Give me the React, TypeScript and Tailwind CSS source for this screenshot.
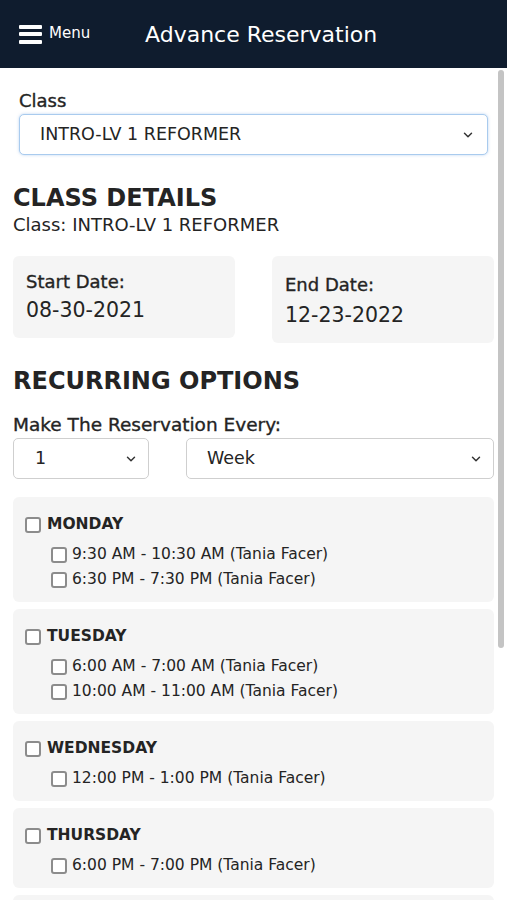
import React from 'react';
import { ChevronDown } from 'lucide-react';

const days = [
  { name: 'MONDAY', slots: ['9:30 AM - 10:30 AM (Tania Facer)', '6:30 PM - 7:30 PM (Tania Facer)'] },
  { name: 'TUESDAY', slots: ['6:00 AM - 7:00 AM (Tania Facer)', '10:00 AM - 11:00 AM (Tania Facer)'] },
  { name: 'WEDNESDAY', slots: ['12:00 PM - 1:00 PM (Tania Facer)'] },
  { name: 'THURSDAY', slots: ['6:00 PM - 7:00 PM (Tania Facer)'] },
];

const Box = () => (
  <span className="inline-block w-[16px] h-[16px] shrink-0 rounded-[3px] border-2 border-[#8c8c8c] bg-white" />
);

const FakeSelect = ({ value, className }: { value: string; className: string }) => (
  <div className={`flex items-center justify-between rounded-[5px] bg-white ${className}`}>
    <span>{value}</span>
    <ChevronDown size={14} strokeWidth={2.5} className="text-[#333]" />
  </div>
);

// medium weight look for DejaVu Book
const medium = '[-webkit-text-stroke:0.35px_currentColor]';

export default function App() {
  return (
    <div className="relative w-[507px] h-[900px] overflow-hidden bg-white text-[#242424] font-['DejaVu_Sans',sans-serif]">
      {/* Header */}
      <header className="h-[68px] bg-[#0f1c2e] flex items-center text-white">
        <div className="flex items-center pl-[19px] w-[145px]">
          <div className="flex flex-col gap-[3.5px]">
            <span className="block w-[23px] h-[4px] rounded-[1px] bg-white" />
            <span className="block w-[23px] h-[4px] rounded-[1px] bg-white" />
            <span className="block w-[23px] h-[4px] rounded-[1px] bg-white" />
          </div>
          <span className="ml-[7px] text-[15px] leading-[20px] mb-[2px]">Menu</span>
        </div>
        <h1 className="text-[22px] leading-[28px] mt-[2px]">Advance Reservation</h1>
      </header>

      <main className="px-[13px]">
        {/* Class select */}
        <div className="px-[6px] pt-[22px]">
          <label className={`block text-[18px] leading-[22px] ${medium}`}>Class</label>
          <FakeSelect
            value="INTRO-LV 1 REFORMER"
            className="mt-[2px] h-[41px] pl-[20px] pr-[12px] text-[17.5px] border border-[#a9cbee] shadow-[0_0_3px_rgba(120,170,230,0.5)]"
          />
        </div>

        <h2 className="mt-[29px] text-[24px] font-bold leading-[28px]">CLASS DETAILS</h2>
        <p className="mt-[2px] text-[18px] leading-[22px]">Class: INTRO-LV 1 REFORMER</p>

        {/* Dates */}
        <div className="mt-[20px] flex gap-[37px] items-start">
          <div className="w-[222px] h-[82px] rounded-[6px] bg-[#f5f5f5] pl-[13px] pt-[15px]">
            <div className={`text-[18px] leading-[22px] ${medium}`}>Start Date:</div>
            <div className="mt-[3px] text-[20.5px] leading-[28px]">08-30-2021</div>
          </div>
          <div className="w-[222px] h-[87px] rounded-[6px] bg-[#f5f5f5] pl-[13px] pt-[18px]">
            <div className={`text-[18px] leading-[22px] ${medium}`}>End Date:</div>
            <div className="mt-[5px] text-[20.5px] leading-[28px]">12-23-2022</div>
          </div>
        </div>

        <h2 className="mt-[23px] text-[24px] font-bold leading-[30px]">RECURRING OPTIONS</h2>
        <div className={`mt-[18px] text-[18.5px] leading-[22px] ${medium}`}>Make The Reservation Every:</div>
        <div className="mt-[2px] flex gap-[37px]">
          <FakeSelect value="1" className="w-[136px] h-[41px] pl-[21px] pr-[10px] text-[17.5px] border border-[#cfcfcf]" />
          <FakeSelect value="Week" className="flex-1 h-[41px] pl-[20px] pr-[10px] text-[17.5px] border border-[#cfcfcf]" />
        </div>

        {/* Days */}
        <div className="mt-[18px] flex flex-col gap-[7px]">
          {days.map((d) => (
            <div key={d.name} className="rounded-[6px] bg-[#f5f5f5] pl-[12px] pt-[18px] pb-[10px]">
              <div className="flex items-center gap-[6px] h-[20px]">
                <Box />
                <span className="text-[15.5px] font-bold">{d.name}</span>
              </div>
              <div className="mt-[7px] pl-[26px] flex flex-col">
                {d.slots.map((s) => (
                  <div key={s} className="flex items-center gap-[5px] h-[25px]">
                    <Box />
                    <span className="text-[15.5px]">{s}</span>
                  </div>
                ))}
              </div>
            </div>
          ))}
          {/* next day card, only its top edge is in view */}
          <div className="h-[40px] rounded-[6px] bg-[#f5f5f5]" />
        </div>
      </main>

      {/* scrollbar thumb */}
      <div className="absolute right-[3px] top-[70px] w-[6px] h-[578px] rounded-full bg-[#c4c4c4]" />
    </div>
  );
}
